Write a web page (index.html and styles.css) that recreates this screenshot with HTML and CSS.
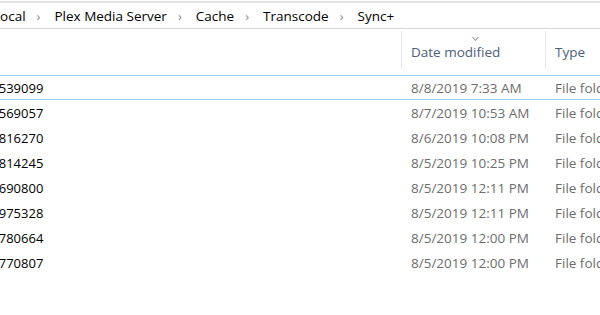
FILE: index.html
```html
<!DOCTYPE html>
<html>
	<head>
		<meta charset="utf-8">
		<title>Sync+</title>
		<link rel="stylesheet" href="styles.css">
	</head>
	<body>
		<div class="explorer">
			<div class="address-bar">
				<div class="crumbs">
					<span class="crumb">Local</span><span class="sep">&#8250;</span>
					<span class="crumb">Plex Media Server</span><span class="sep">&#8250;</span>
					<span class="crumb">Cache</span><span class="sep">&#8250;</span>
					<span class="crumb">Transcode</span><span class="sep">&#8250;</span>
					<span class="crumb">Sync+</span>
				</div>
			</div>
			<div class="list">
				<div class="head">
					<div class="col col-name"></div>
					<div class="col col-date">
						<span class="sort"></span>
						Date modified
					</div>
					<div class="col col-type">Type</div>
				</div>
				<div class="row focused">
					<div class="col col-name"><span>1565539099</span></div>
					<div class="col col-date">8/8/2019 7:33 AM</div>
					<div class="col col-type">File folder</div>
				</div>
				<div class="row">
					<div class="col col-name"><span>1565569057</span></div>
					<div class="col col-date">8/7/2019 10:53 AM</div>
					<div class="col col-type">File folder</div>
				</div>
				<div class="row">
					<div class="col col-name"><span>1565816270</span></div>
					<div class="col col-date">8/6/2019 10:08 PM</div>
					<div class="col col-type">File folder</div>
				</div>
				<div class="row">
					<div class="col col-name"><span>1565814245</span></div>
					<div class="col col-date">8/5/2019 10:25 PM</div>
					<div class="col col-type">File folder</div>
				</div>
				<div class="row">
					<div class="col col-name"><span>1565690800</span></div>
					<div class="col col-date">8/5/2019 12:11 PM</div>
					<div class="col col-type">File folder</div>
				</div>
				<div class="row">
					<div class="col col-name"><span>1564975328</span></div>
					<div class="col col-date">8/5/2019 12:11 PM</div>
					<div class="col col-type">File folder</div>
				</div>
				<div class="row">
					<div class="col col-name"><span>1565780664</span></div>
					<div class="col col-date">8/5/2019 12:00 PM</div>
					<div class="col col-type">File folder</div>
				</div>
				<div class="row">
					<div class="col col-name"><span>1565770807</span></div>
					<div class="col col-date">8/5/2019 12:00 PM</div>
					<div class="col col-type">File folder</div>
				</div>
			</div>
		</div>
	</body>
</html>
```
FILE: styles.css
```css
*{margin:0;padding:0;box-sizing:border-box;}
body{background:#fff;font-family:"Open Sans","Noto Sans",sans-serif;font-size:13px;color:#1a1a1a;overflow:hidden;}
.explorer{width:600px;height:315px;overflow:hidden;}

/* address bar */
.address-bar{margin-top:1px;height:28px;border-top:2px solid #e3e3e3;border-bottom:1px solid #d6d6d6;overflow:hidden;}
.crumbs{display:flex;align-items:center;height:100%;margin-left:-7px;white-space:nowrap;}
.crumb{color:#000;font-size:13.5px;}
.sep{color:#8a8a8a;font-size:13px;margin:0 14px 0 11px;}

/* list */
.head{display:flex;height:46px;}
.head .col{display:flex;align-items:center;padding-top:4px;border-right:1px solid #e5e5ec;margin:2px 0 6px;color:#4c607a;font-size:13.5px;position:relative;}
.head .col-type{border-right:none;}
.sort{position:absolute;left:71px;top:4px;width:5px;height:5px;border-right:1px solid #9aa3b0;border-bottom:1px solid #9aa3b0;transform:rotate(45deg);}

.col{flex:none;white-space:nowrap;overflow:hidden;}
.col-name{width:402px;}
.col-date{width:144px;padding-left:9px;}
.col-type{width:120px;padding-left:9px;}

.row{display:flex;align-items:center;height:25px;border:1px solid transparent;border-left:none;border-right:none;}
.row.focused{border-color:#99d1ff;}
.row .col-name span{display:block;margin-left:-31px;color:#000;font-size:13px;}
.row .col-date{color:#6d6d6d;font-size:13.5px;}
.row .col-type{color:#6d6d6d;font-size:13.5px;}
```
